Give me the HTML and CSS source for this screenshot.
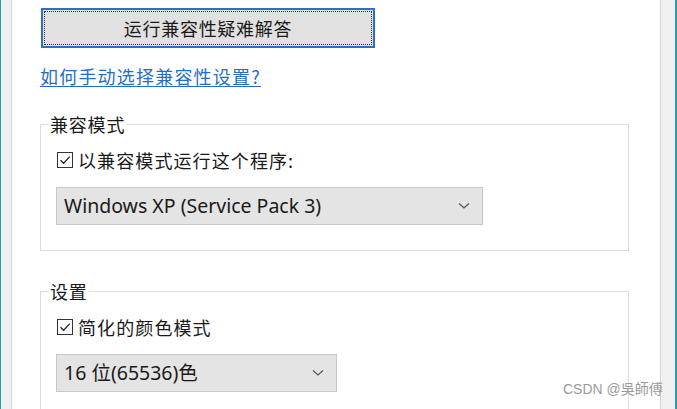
FILE: index.html
```html
<!DOCTYPE html>
<html lang="zh-CN">
<head>
<meta charset="utf-8">
<title>兼容性</title>
<link rel="stylesheet" href="styles.css">
</head>
<body>
<div class="frame">
  <div class="edge edge-left"></div>
  <main class="content">
    <button class="btn" type="button">运行兼容性疑难解答</button>
    <a class="link" href="#">如何手动选择兼容性设置?</a>

    <fieldset class="group group-compat">
      <legend class="legend">兼容模式</legend>
      <label class="check-row">
        <span class="checkbox"><svg width="14" height="14" viewBox="0 0 14 14"><path d="M2.5 7.2 L5.6 10.3 L11.8 3.6" fill="none" stroke="#222" stroke-width="1.3"/></svg></span>
        <span class="check-text">以兼容模式运行这个程序:</span>
      </label>
      <div class="select select-wide">
        <span class="select-text">Windows XP (Service Pack 3)</span>
        <svg class="chev" width="12" height="8" viewBox="0 0 12 8"><path d="M1 1.5 L6 6 L11 1.5" fill="none" stroke="#555" stroke-width="1.2"/></svg>
      </div>
    </fieldset>

    <fieldset class="group group-settings">
      <legend class="legend">设置</legend>
      <label class="check-row">
        <span class="checkbox"><svg width="14" height="14" viewBox="0 0 14 14"><path d="M2.5 7.2 L5.6 10.3 L11.8 3.6" fill="none" stroke="#222" stroke-width="1.3"/></svg></span>
        <span class="check-text">简化的颜色模式</span>
      </label>
      <div class="select select-narrow">
        <span class="select-text">16 位(65536)色</span>
        <svg class="chev" width="12" height="8" viewBox="0 0 12 8"><path d="M1 1.5 L6 6 L11 1.5" fill="none" stroke="#555" stroke-width="1.2"/></svg>
      </div>
    </fieldset>
  </main>
  <div class="edge edge-right"></div>
  <div class="watermark">CSDN @吳師傅</div>
</div>
</body>
</html>
```

FILE: styles.css
```css
html, body {
  margin: 0;
  padding: 0;
  background: #ffffff;
}

body {
  width: 677px;
  height: 409px;
  overflow: hidden;
  font-family: "Noto Sans", "Noto Sans CJK SC", sans-serif;
  color: #1a1a1a;
}

.frame {
  position: relative;
  display: flex;
  width: 677px;
  height: 409px;
  overflow: hidden;
}

.edge {
  flex: 0 0 auto;
  background: #f0f0f0;
}

.edge-left {
  width: 10px;
  border-left: 1px solid #2a9ea6;
  border-right: 1px solid #d6d6d6;
}

.edge-right {
  width: 14px;
  border-left: 1px solid #d6d6d6;
  border-right: 2px solid #2a9ea6;
}

.content {
  flex: 1 1 auto;
  display: flex;
  flex-direction: column;
  align-items: flex-start;
  padding: 8px 31px 0 28px;
  background: #ffffff;
  min-width: 0;
  overflow: hidden;
}

.btn {
  flex: 0 0 auto;
  width: 334px;
  height: 40px;
  margin-left: 1px;
  border: 2px solid #2f6fc8;
  background: #e1e1e1;
  outline: 1px dotted #333;
  outline-offset: -4px;
  font-family: "Noto Sans CJK SC", sans-serif;
  font-size: 18px;
  letter-spacing: 0.7px;
  color: #1a1a1a;
  padding: 0;
  line-height: 36px;
}

.link {
  margin-top: 16px;
  font-family: "Noto Sans CJK SC", sans-serif;
  font-size: 18px;
  letter-spacing: 1.2px;
  line-height: 24px;
  color: #1f6fc6;
  text-decoration: underline;
  text-underline-offset: 2px;
}

.group {
  flex: 0 0 auto;
  align-self: stretch;
  margin: 0;
  padding: 0 0 0 16px;
  border: 1px solid #dcdcdc;
  display: flex;
  flex-direction: column;
  align-items: flex-start;
  min-width: 0;
}

.group-compat {
  margin-top: 27px;
  padding-bottom: 25px;
}

.group-settings {
  margin-top: 31px;
  padding-bottom: 30px;
}

.legend {
  margin-left: -8px;
  padding: 0 1px;
  font-family: "Noto Sans CJK SC", sans-serif;
  font-size: 18px;
  letter-spacing: 0.8px;
  line-height: 18px;
  color: #1a1a1a;
}

.check-row {
  display: flex;
  align-items: center;
  gap: 5px;
  margin-top: 16px;
  margin-left: 0;
  height: 22px;
}

.checkbox {
  width: 14px;
  height: 14px;
  border: 1px solid #333;
  background: #fff;
  display: flex;
  align-items: center;
  justify-content: center;
}

.check-text {
  font-family: "Noto Sans CJK SC", sans-serif;
  font-size: 18px;
  letter-spacing: 1.1px;
  line-height: 22px;
  color: #1a1a1a;
}

.select {
  margin-top: 16px;
  margin-left: -1px;
  height: 36px;
  border: 1px solid #c8c8c8;
  background: #e4e4e4;
  display: flex;
  align-items: center;
  justify-content: space-between;
  padding: 0 12px 0 7px;
  box-sizing: content-box;
}

.select-wide {
  width: 406px;
}

.select-narrow {
  width: 260px;
}

.select-text {
  font-family: "Noto Sans", "Noto Sans CJK SC", sans-serif;
  font-size: 19.5px;
  line-height: 24px;
  color: #1a1a1a;
}

.chev {
  display: block;
}

.watermark {
  position: absolute;
  left: 563px;
  top: 380px;
  font-family: "Liberation Sans", "Noto Sans CJK TC", sans-serif;
  font-size: 14px;
  line-height: 18px;
  color: #9a9a9a;
  white-space: nowrap;
}
```
